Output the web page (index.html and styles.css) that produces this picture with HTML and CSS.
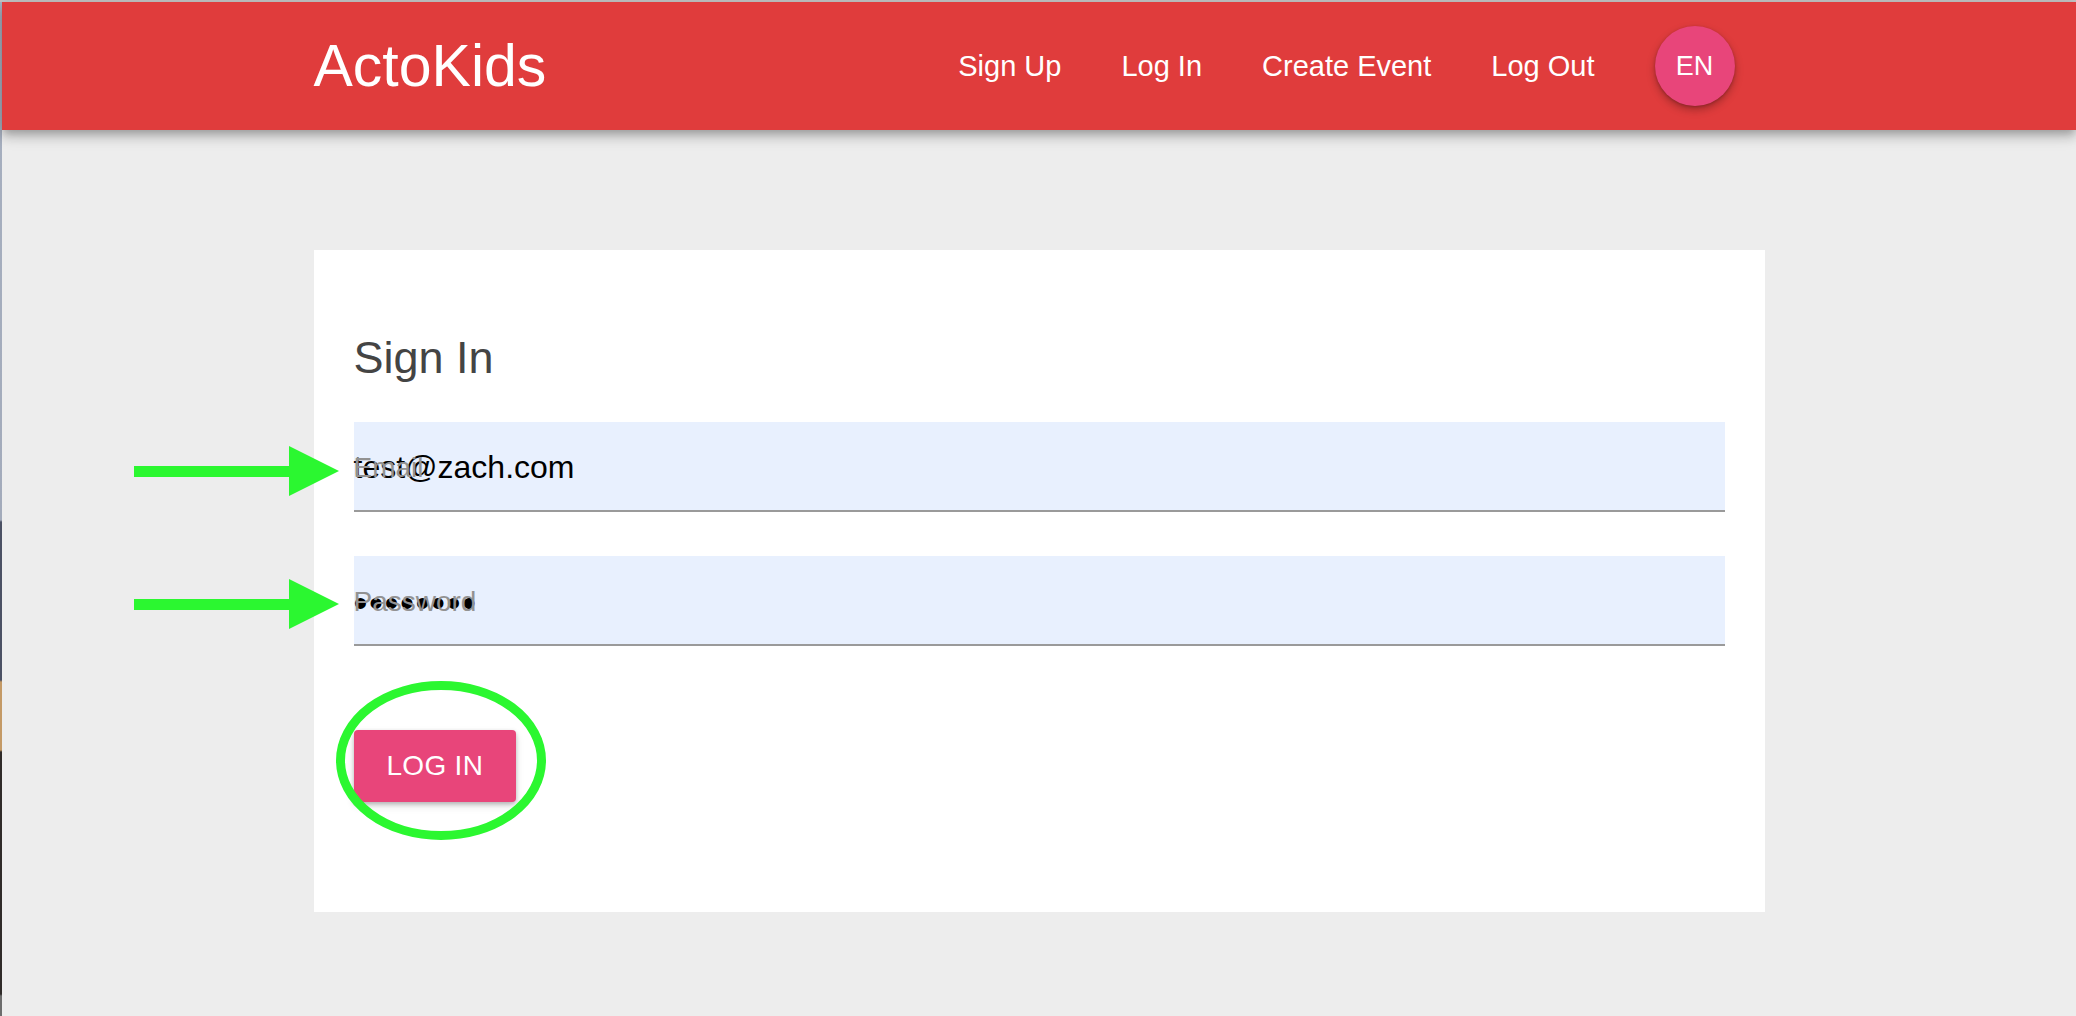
FILE: index.html
```html
<!DOCTYPE html>
<html lang="en">
<head>
<meta charset="utf-8">
<title>ActoKids - Sign In</title>
<link rel="stylesheet" href="styles.css">
</head>
<body>
<div class="screen">
  <div class="desk-strip"></div>
  <div class="page">
    <header class="appbar">
      <div class="appbar-inner">
        <div class="brand">ActoKids</div>
        <nav class="nav">
          <a href="#" class="nav-link">Sign Up</a>
          <a href="#" class="nav-link">Log In</a>
          <a href="#" class="nav-link">Create Event</a>
          <a href="#" class="nav-link">Log Out</a>
          <button class="lang">EN</button>
        </nav>
      </div>
    </header>
    <main class="content">
      <section class="card">
        <h1 class="title">Sign In</h1>
        <div class="field">
          <span class="value value-email">test@zach.com</span>
          <span class="label">Email</span>
        </div>
        <div class="field">
          <span class="value value-pass">••••••••</span>
          <span class="label">Password</span>
        </div>
        <button class="login">LOG IN</button>
      </section>
    </main>
  </div>
</div>
<svg class="annotations" width="2076" height="1016" viewBox="0 0 2076 1016" xmlns="http://www.w3.org/2000/svg">
  <rect x="134" y="466" width="158" height="11" fill="#2bf730"/>
  <polygon points="289,446 339,471 289,496" fill="#2bf730"/>
  <rect x="134" y="599" width="158" height="11" fill="#2bf730"/>
  <polygon points="289,579 339,604 289,629" fill="#2bf730"/>
  <ellipse cx="441" cy="760.5" rx="100.5" ry="75" fill="none" stroke="#2bf730" stroke-width="9"/>
</svg>
</body>
</html>
```
FILE: styles.css
```css
* { box-sizing: border-box; }
html, body { margin: 0; padding: 0; }
body {
  position: relative;
  width: 2076px;
  height: 1016px;
  overflow: hidden;
  font-family: "Liberation Sans", Arial, sans-serif;
  background: #ededed;
}
.screen {
  display: flex;
  height: 1016px;
  border-top: 2px solid #c4c4c4;
}
.desk-strip {
  flex: none;
  width: 2px;
  background: linear-gradient(to bottom,
    #a7b0c0 0, #a3abbb 518px,
    #4b5164 520px, #4b5164 678px,
    #c49a66 680px, #c49a66 748px,
    #2f2b29 750px, #2f2b29 992px,
    #6d6d6d 994px, #6d6d6d 1016px);
}
.page {
  flex: 1;
  display: flex;
  flex-direction: column;
  background: #ededed;
}
.appbar {
  position: relative;
  z-index: 1;
  height: 128px;
  background: #e03c3c;
  box-shadow: 0 4px 8px -2px rgba(0,0,0,0.2), 0 8px 10px 0 rgba(0,0,0,0.14), 0 2px 20px 0 rgba(0,0,0,0.12);
}
.appbar-inner {
  width: 1451px;
  height: 100%;
  margin: 0 auto;
  padding-right: 30px;
  display: flex;
  align-items: center;
  justify-content: space-between;
}
.brand {
  color: #fff;
  font-size: 59px;
  line-height: 1;
}
.nav {
  display: flex;
  align-items: center;
  gap: 60px;
}
.nav-link {
  color: #fff;
  font-size: 29px;
  line-height: 1;
  text-decoration: none;
}
.lang {
  width: 80px;
  height: 80px;
  border: 0;
  border-radius: 50%;
  background: #e8457a;
  color: #fff;
  font-family: "Liberation Sans", Arial, sans-serif;
  font-size: 27px;
  font-weight: 400;
  padding: 0;
  box-shadow: 0 4px 8px rgba(0,0,0,0.28), 0 1px 3px rgba(0,0,0,0.2);
}
.content { flex: 1; }
.card {
  width: 1451px;
  margin: 120px auto 0;
  background: #fff;
  padding: 80px 40px 110px;
}
.title {
  margin: 0 0 36px;
  font-size: 45px;
  font-weight: 400;
  line-height: 56px;
  color: #444;
}
.field {
  position: relative;
  height: 90px;
  background: #e8f0fe;
  border-bottom: 2px solid #9a9a9a;
}
.field + .field { margin-top: 44px; }
.value {
  display: block;
  color: #000;
}
.value-email {
  padding-top: 27px;
  font-size: 32px;
  line-height: 37px;
}
.value-pass {
  padding-top: 25px;
  font-size: 40px;
  line-height: 44px;
  letter-spacing: 1.5px;
}
.label {
  position: absolute;
  top: 30px;
  left: 0;
  font-size: 28px;
  line-height: 32px;
  color: #929292;
}
.login {
  display: block;
  margin-top: 84px;
  height: 72px;
  padding: 0 33px;
  border: 0;
  border-radius: 4px;
  background: #e8457a;
  color: #fff;
  font-family: "Liberation Sans", Arial, sans-serif;
  font-size: 28px;
  font-weight: 400;
  letter-spacing: 0.3px;
  box-shadow: 0 2px 4px rgba(0,0,0,0.22), 0 4px 8px rgba(0,0,0,0.12);
}
.annotations {
  position: absolute;
  top: 0;
  left: 0;
  pointer-events: none;
}
```
